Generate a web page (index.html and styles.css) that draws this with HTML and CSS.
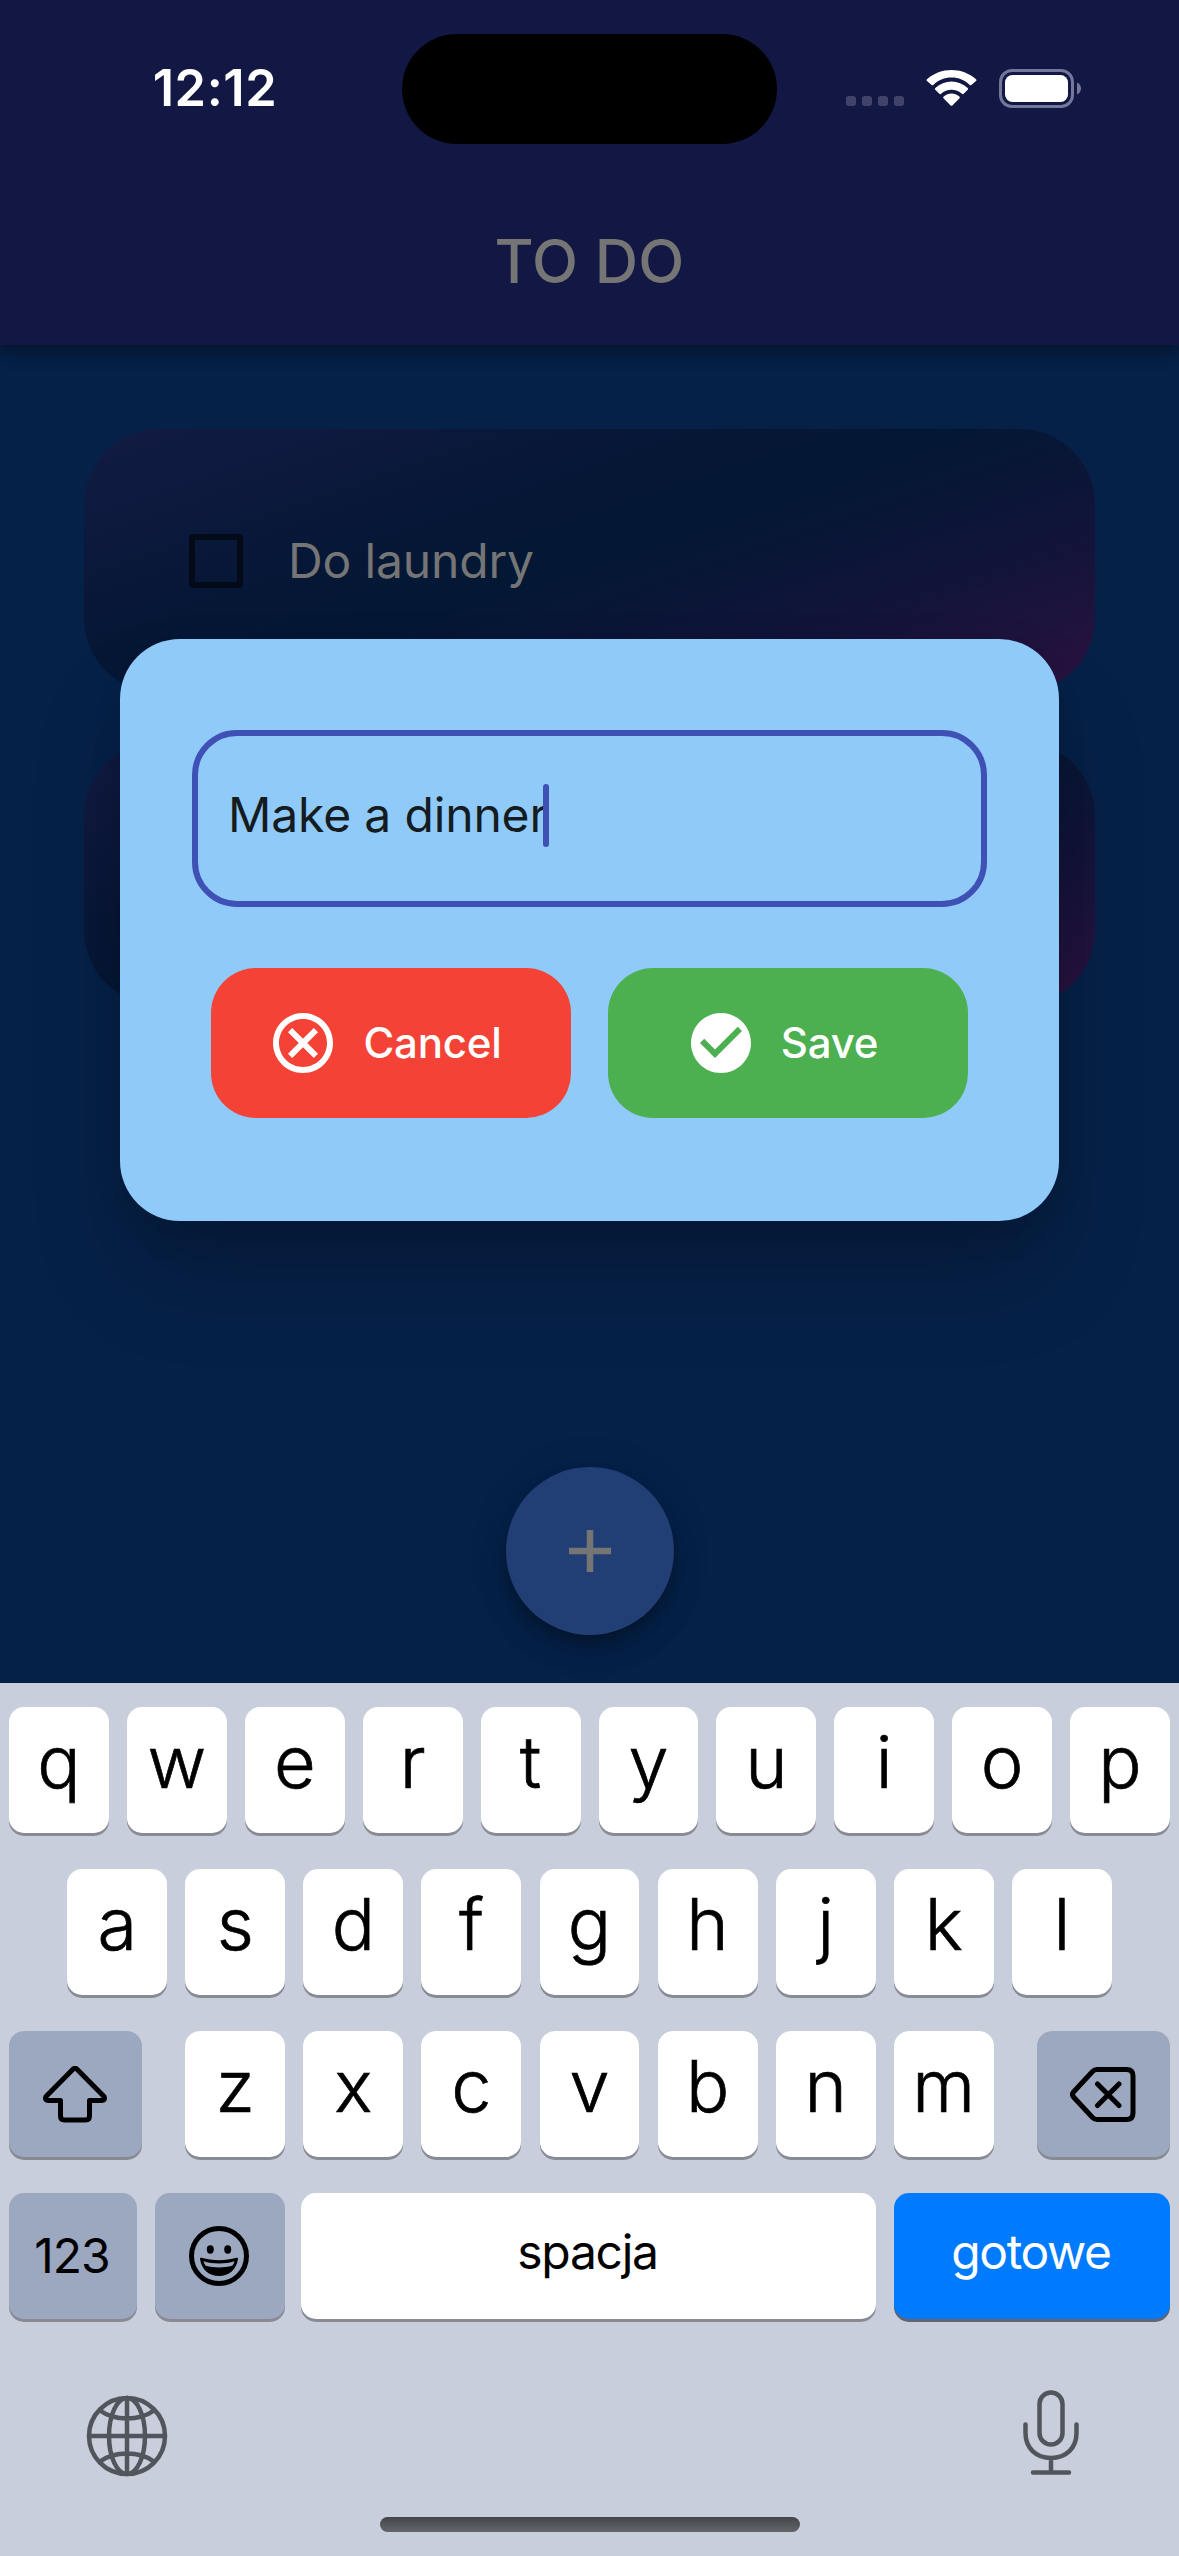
FILE: index.html
```html
<!DOCTYPE html>
<html lang="en">
<head>
<meta charset="utf-8">
<title>To do</title>
<link rel="stylesheet" href="styles.css">
</head>
<body>
<div class="screen">
  <header class="appbar">
    <div class="status">
      <div class="clock">12:12</div>
      <div class="island"></div>
      <div class="status-icons">
        <svg class="cell" viewBox="0 0 58 10"><rect width="10" height="10" rx="3"/><rect x="16" width="10" height="10" rx="3"/><rect x="32" width="10" height="10" rx="3"/><rect x="48" width="10" height="10" rx="3"/></svg>
        <svg class="wifi" viewBox="0 0 51 37"><path d="M25.500 7.600C32.600 7.600 39 10.300 43.700 14.900a1.200 1.200 0 0 0 1.700 0L50 11.100a1.300 1.300 0 0 0 0-1.800C36.400-3.100 14.600-3.100 1 9.300a1.300 1.300 0 0 0 0 1.800L5.600 14.900a1.200 1.200 0 0 0 1.700 0C12 10.300 18.400 7.600 25.500 7.600z"/><path d="M25.500 19.800c3.900 0 7.600 1.500 10.400 4a1.300 1.300 0 0 0 1.800 0l4-4a1.300 1.300 0 0 0 0-1.900c-9.100-8.700-23.300-8.700-32.400 0a1.300 1.300 0 0 0 0 1.900l4 4a1.300 1.300 0 0 0 1.800 0c2.800-2.500 6.500-4 10.400-4z"/><path d="M33.300 28.400a1.300 1.300 0 0 0 0-2c-4.500-3.900-11.100-3.900-15.600 0a1.300 1.300 0 0 0 0 2l6.900 7a1.300 1.300 0 0 0 1.800 0z"/></svg>
        <svg class="battery" viewBox="0 0 82 39"><rect class="shell" x="1.500" y="1.500" width="72" height="36" rx="11.500"/><path class="tip" d="M78 13.500c2.700 1.200 4 3.500 4 6s-1.300 4.800-4 6z"/><rect x="6" y="6" width="63" height="27" rx="7.500"/></svg>
      </div>
    </div>
    <h1 class="title">TO DO</h1>
  </header>
  <main class="content">
    <ul class="tasks">
      <li class="task"><span class="checkbox"></span><span class="task-name">Do laundry</span></li>
      <li class="task"></li>
    </ul>
    <div class="fab"><svg viewBox="0 0 42 42"><path d="M21 0v42M0 21h42"/></svg></div>
    <section class="dialog">
      <div class="field"><span class="field-text">Make a dinner</span><span class="caret"></span></div>
      <div class="actions">
        <div class="btn cancel"><svg viewBox="0 0 24 24"><path d="M17 8.410L15.590 7 12 10.590 8.410 7 7 8.410 10.590 12 7 15.590 8.410 17 12 13.410 15.590 17 17 15.590 13.410 12zM12 2C6.470 2 2 6.470 2 12s4.470 10 10 10 10-4.470 10-10S17.530 2 12 2zm0 18c-4.410 0-8-3.590-8-8s3.590-8 8-8 8 3.590 8 8-3.590 8-8 8z"/></svg><span>Cancel</span></div>
        <div class="btn save"><svg viewBox="0 0 24 24"><path d="M12 2C6.480 2 2 6.480 2 12s4.480 10 10 10 10-4.480 10-10S17.520 2 12 2zm-2 15l-5-5 1.410-1.410L10 14.170l7.590-7.590L19 8l-9 9z"/></svg><span>Save</span></div>
      </div>
    </section>
  </main>
  <section class="keyboard">
    <div class="row"><div class="key">q</div><div class="key">w</div><div class="key">e</div><div class="key">r</div><div class="key">t</div><div class="key">y</div><div class="key">u</div><div class="key">i</div><div class="key">o</div><div class="key">p</div></div>
    <div class="row tight"><div class="key">a</div><div class="key">s</div><div class="key">d</div><div class="key">f</div><div class="key">g</div><div class="key">h</div><div class="key">j</div><div class="key">k</div><div class="key">l</div></div>
    <div class="row tight">
      <div class="key dark side"><svg class="line shift" width="64" height="57" viewBox="0 0 64 57"><path d="M29.700 3.400 Q32 1.400 34.300 3.400 L61 30.500 Q62.500 34.400 59 34.500 H46.500 V50 Q46.500 54 42.500 54 H21.500 Q17.500 54 17.500 50 V34.500 H5 Q1.500 34.400 3 30.500z"/></svg></div>
      <div class="key">z</div><div class="key">x</div><div class="key">c</div><div class="key">v</div><div class="key">b</div><div class="key">n</div><div class="key">m</div>
      <div class="key dark side"><svg class="line" width="66" height="55" viewBox="0 0 66 55"><path d="M27 2.500H56.500Q63 2.500 63 9V46Q63 52.500 56.500 52.500H27Q24.500 52.500 22.500 50.500L3.500 30Q1.500 27.500 3.500 25L22.500 4.500Q24.500 2.500 27 2.500zM27.500 17L49 38.500M49 17L27.500 38.500"/></svg></div>
    </div>
    <div class="row">
      <div class="key dark word num">123</div>
      <div class="key dark emoji"><svg width="60" height="60" viewBox="0 0 60 60"><circle class="ring" cx="30" cy="30" r="27.500"/><ellipse cx="21.300" cy="23.500" rx="3.500" ry="4.200"/><ellipse cx="38.700" cy="23.500" rx="3.500" ry="4.200"/><path fill-rule="evenodd" d="M12.500 31.800q-1.700-.6-1.500 1.200C12.500 43.500 20 50 30 50s17.500-6.500 19-17q.200-1.800-1.500-1.200C36 35 24 35 12.500 31.800zM14.500 35.300C24 38.300 36 38.300 45.500 35.300q-.8 3-2.300 4.500C35 42 25 42 16.800 39.800q-1.500-1.500-2.300-4.500z"/></svg></div>
      <div class="key word space">spacja</div>
      <div class="key word done">gotowe</div>
    </div>
    <div class="tools">
      <svg width="82" height="82" viewBox="0 0 82 82"><circle cx="41" cy="41" r="38"/><path d="M41 3v76M3 41h76M14 15.500Q25 23.500 41 23.500T68 15.500M14 66.500Q25 58.500 41 58.500T68 66.500"/><ellipse cx="41" cy="41" rx="18" ry="38"/></svg>
      <svg class="mic" width="56" height="86" viewBox="0 0 56 86"><rect x="16.500" y="2.500" width="23" height="52" rx="11.500"/><path d="M2.500 34.500V43C2.500 58 13 68 28 68S53.500 58 53.500 43V34.500M28 68v14M10 82.500h36"/></svg>
    </div>
    <div class="home"></div>
  </section>
</div>
</body>
</html>
```
FILE: styles.css
```css
* { box-sizing: border-box; }
body { margin: 0; font-family: Inter, "Liberation Sans", sans-serif; }
svg { display: block; flex: none; }
.screen { width: 1179px; height: 2556px; display: flex; flex-direction: column; overflow: hidden; background: #062148; }

.appbar { position: relative; z-index: 1; height: 345px; flex: none; background: #131743; box-shadow: 0 6px 12px rgba(0,0,0,.25), 0 12px 15px rgba(0,0,0,.1); }
.status { height: 178px; display: grid; grid-template-columns: 402px 375px 402px; align-items: center; }
.island { height: 110px; border-radius: 55px; background: #000; }
.clock { color: #fff; font-size: 50.500px; line-height: 60px; font-weight: 600; letter-spacing: .6px; text-align: center; padding: 0 0 2px 28px; }
.status-icons { display: flex; align-items: center; gap: 22px; fill: #fff; padding: 0 0 2px 69px; }
.cell { width: 58px; height: 10px; fill: #41446a; margin-top: 26px; }
.wifi { width: 51px; height: 37px; }
.battery { width: 82px; height: 39px; }
.shell { fill: none; stroke: #74769a; stroke-width: 3; }
.tip { fill: #74769a; }
.title { margin: 47px 0 0; text-align: center; color: #757575; font-size: 60px; line-height: 72px; font-weight: 500; letter-spacing: .3px; }

.content { position: relative; height: 1338px; flex: none; padding: 84px 84px 0; }
.tasks { list-style: none; margin: 0; padding: 0; display: flex; flex-direction: column; gap: 48px; }
.task { height: 264px; border-radius: 75px; padding-left: 105px; display: flex; align-items: center; gap: 45px; background: linear-gradient(161deg, #121b44 0%, #071737 33%, #031834 49%, #12143a 74%, #2b1240 100%); }
.checkbox { width: 54px; height: 54px; border: 6px solid #030a18; border-radius: 4px; }
.task-name { color: #757575; font-size: 48px; line-height: 60px; letter-spacing: -.15px; }
.fab { width: 168px; height: 168px; margin: 462px auto 0; border-radius: 50%; background: #213f74; display: flex; align-items: center; justify-content: center; box-shadow: 0 9px 15px -3px rgba(0,0,0,.3), 0 18px 30px rgba(0,0,0,.12), 0 3px 54px rgba(0,0,0,.05); }
.fab svg { width: 42px; height: 42px; fill: none; stroke: #757575; stroke-width: 6.500; }

.dialog { position: absolute; left: 120px; top: 294px; width: 939px; height: 582px; border-radius: 60px; padding: 91px 72px 0; background: #90caf9; box-shadow: 0 60px 90px rgba(0,0,0,.2), 0 18px 42px -12px rgba(0,0,0,.12); }
.field { height: 177px; border: 6px solid #3f51b5; border-radius: 45px; padding: 0 0 6px 30px; display: flex; align-items: center; }
.field-text { color: #141c21; font-size: 48px; line-height: 60px; letter-spacing: -.15px; width: 315px; padding-bottom: 2px; white-space: nowrap; }
.caret { width: 6px; height: 63px; border-radius: 3px; background: #3f51b5; }
.actions { display: flex; justify-content: center; gap: 37px; margin-top: 61px; }
.btn { width: 360px; height: 150px; border-radius: 45px; display: flex; align-items: center; justify-content: center; gap: 24px; color: #fff; font-size: 42px; font-weight: 500; letter-spacing: -.2px; padding-right: 13px; }
.btn svg { width: 72px; height: 72px; fill: #fff; }
.btn span { padding-bottom: 2px; }
.cancel { background: #f44336; }
.save { background: #4caf50; }

.keyboard { height: 873px; flex: none; background: #c8cedc; padding: 24px 9px 0; }
.row { height: 126px; margin-bottom: 36px; display: flex; justify-content: center; gap: 18px; }
.tight { gap: 18.200px; }
.key { flex: none; width: 99.900px; height: 126px; border-radius: 15px; background: #fff; box-shadow: 0 3px 0 #888b94; color: #000; font-size: 72px; font-weight: 300; -webkit-text-stroke: .7px #000; line-height: 110px; text-align: center; }
.dark { background: #9ca8c0; display: flex; align-items: center; justify-content: center; }
.side { width: 133px; }
.side:first-child { margin-right: 25px; }
.side:last-child { margin-left: 25px; }
.line { fill: none; stroke: #000; stroke-width: 5; stroke-linecap: round; stroke-linejoin: round; }
.shift { margin-right: 2px; }
.word { font-size: 48px; font-weight: 400; -webkit-text-stroke: 0; line-height: 118px; }
.num { width: 128px; letter-spacing: -1px; padding-right: 2px; }
.emoji { width: 130px; padding-right: 2px; }
.ring { fill: none; stroke: #000; stroke-width: 5; }
.space { width: 575px; margin-left: -2px; letter-spacing: -1.300px; padding-right: 2px; }
.done { width: 276px; letter-spacing: -1.400px; padding-right: 2px; background: #007aff; color: #fff; box-shadow: 0 3px 0 #5f646f; }
.tools { height: 150px; margin: 76px 91px 0 77px; display: flex; justify-content: space-between; }
.tools svg { fill: none; stroke: #50565c; stroke-width: 4.500; stroke-linecap: round; }
.mic { margin-top: -5px; }
.home { width: 420px; height: 15px; margin: -28px auto 0; border-radius: 8px; background: linear-gradient(#434549, #62666c); }
```
